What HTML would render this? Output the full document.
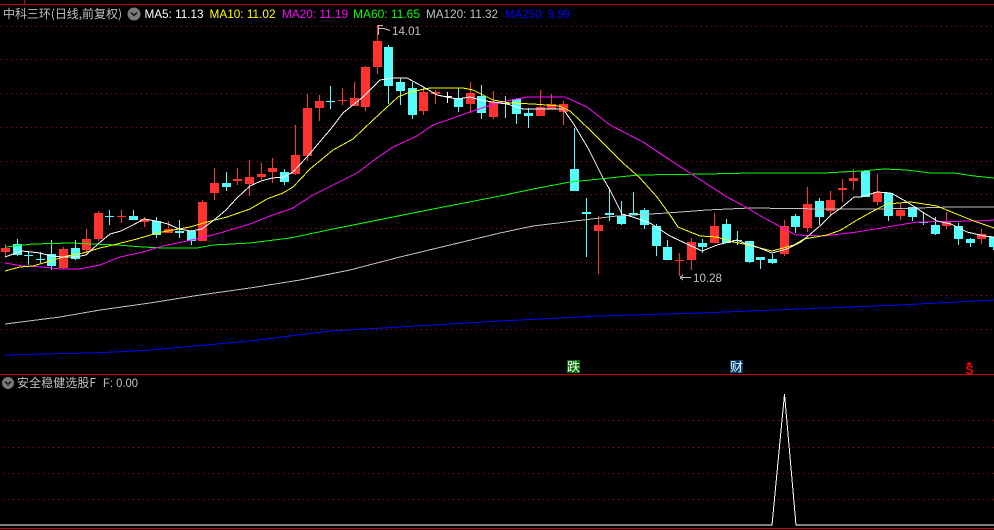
<!DOCTYPE html>
<html lang="zh">
<head>
<meta charset="utf-8">
<title>中科三环</title>
<style>
html,body{margin:0;padding:0;background:#000;width:994px;height:530px;overflow:hidden}
svg{display:block}
text{font-size:12px;font-family:"Liberation Sans","WenQuanYi Zen Hei",sans-serif}
.c{font-family:"WenQuanYi Zen Hei","Noto Sans CJK SC",sans-serif}
.l{fill:none;stroke-width:1;shape-rendering:crispEdges}
.g{fill:none;stroke:#a00000;stroke-width:1;stroke-dasharray:1 4;shape-rendering:crispEdges}
</style>
</head>
<body>
<svg xmlns="http://www.w3.org/2000/svg" width="994" height="530" viewBox="0 0 994 530">
<rect width="994" height="530" fill="#000"/>
<!-- frame -->
<path d="M0 4.5H994M24.5 0V4M0 374.5H994M0 528.5H994" stroke="#c80000" stroke-width="1" fill="none" shape-rendering="crispEdges"/>
<!-- grid -->
<path class="g" d="M1 26.5H994M1 59.5H994M1 93.5H994M1 127.5H994M1 161.5H994M1 194.5H994M1 228.5H994M1 262.5H994M1 295.5H994M1 329.5H994M3 420.5H994M3 447.5H994M3 473.5H994M3 499.5H994"/>
<!-- red wicks -->
<path fill="none" stroke="#ff3232" stroke-width="1" shape-rendering="crispEdges" d="M5.5 244V256M63.5 247V269M86.5 229V253M98.5 211V241M121.5 210V223M144.5 217V227M168.5 221V233M202.5 200V241M214.5 168V200M237.5 168V185M249.5 160V196M261.5 163V180M272.5 158V183M295.5 125V175M307.5 94V161M319.5 95V121M342.5 88V105M354.5 82V106M365.5 66V111M377.5 25V74M423.5 88V115M435.5 90V104M470.5 82V113M493.5 91V119M540.5 90V116M551.5 94V109M563.5 101V125M598.5 216V274M679.5 253V276M691.5 238V270M714.5 213V243M784.5 220V256M807.5 187V232M830.5 191V215M842.5 179V202M853.5 169V190M877.5 174V205M900.5 204V220M946.5 212V229M981.5 229V244"/>
<!-- red bodies -->
<g fill="#ff3232">
<rect x="1" y="248" width="9" height="4"/><rect x="59" y="249" width="9" height="19"/><rect x="82" y="239" width="9" height="11"/><rect x="94" y="213" width="9" height="26"/><rect x="117" y="216" width="9" height="1"/><rect x="140" y="219" width="9" height="3"/><rect x="164" y="229" width="9" height="4"/><rect x="198" y="202" width="9" height="39"/><rect x="210" y="183" width="9" height="10"/><rect x="233" y="179" width="9" height="2"/><rect x="245" y="177" width="9" height="7"/><rect x="257" y="174" width="9" height="3"/><rect x="268" y="168" width="9" height="4"/><rect x="291" y="155" width="9" height="19"/><rect x="303" y="108" width="9" height="48"/><rect x="315" y="101" width="9" height="7"/><rect x="338" y="100" width="9" height="1"/><rect x="350" y="98" width="9" height="8"/><rect x="361" y="67" width="9" height="40"/><rect x="373" y="41" width="9" height="26"/><rect x="419" y="92" width="9" height="19"/><rect x="431" y="92" width="9" height="2"/><rect x="466" y="93" width="9" height="11"/><rect x="489" y="102" width="9" height="15"/><rect x="536" y="107" width="9" height="9"/><rect x="547" y="104" width="9" height="5"/><rect x="559" y="104" width="9" height="8"/><rect x="594" y="225" width="9" height="6"/><rect x="675" y="260" width="9" height="1"/><rect x="687" y="242" width="9" height="18"/><rect x="710" y="226" width="9" height="17"/><rect x="780" y="226" width="9" height="28"/><rect x="803" y="204" width="9" height="24"/><rect x="826" y="200" width="9" height="11"/><rect x="838" y="188" width="9" height="2"/><rect x="849" y="178" width="9" height="3"/><rect x="873" y="192" width="9" height="10"/><rect x="896" y="210" width="9" height="6"/><rect x="942" y="222" width="9" height="4"/><rect x="977" y="234" width="9" height="5"/>
</g>
<!-- cyan wicks -->
<path fill="none" stroke="#54fcfc" stroke-width="1" shape-rendering="crispEdges" d="M17.5 239V256M28.5 251V265M40.5 252V263M51.5 240V270M75.5 240V260M109.5 210V225M133.5 210V220M156.5 217V238M179.5 220V238M191.5 230V245M226.5 172V191M284.5 169V185M330.5 86V109M388.5 45V104M400.5 78V105M412.5 82V119M458.5 88V112M481.5 85V119M505.5 96V118M516.5 98V124M528.5 108V128M574.5 128V191M586.5 198V257M609.5 189V221M621.5 201V225M633.5 192V215M644.5 208V229M656.5 224V256M667.5 240V260M702.5 239V253M726.5 219V243M737.5 231V245M749.5 241V263M760.5 257V269M772.5 254V264M795.5 214V233M819.5 198V225M865.5 170V197M888.5 193V221M912.5 207V221M923.5 213V225M935.5 217V235M958.5 223V245M970.5 238V247M993.5 237V250"/>
<!-- cyan bodies -->
<g fill="#54fcfc">
<rect x="13" y="244" width="9" height="11"/><rect x="24" y="255" width="9" height="1"/><rect x="36" y="259" width="9" height="1"/><rect x="47" y="254" width="9" height="12"/><rect x="71" y="248" width="9" height="11"/><rect x="105" y="216" width="9" height="1"/><rect x="129" y="216" width="9" height="4"/><rect x="152" y="221" width="9" height="14"/><rect x="175" y="231" width="9" height="2"/><rect x="187" y="231" width="9" height="10"/><rect x="222" y="183" width="9" height="4"/><rect x="280" y="172" width="9" height="10"/><rect x="326" y="101" width="9" height="1"/><rect x="384" y="47" width="9" height="39"/><rect x="396" y="82" width="9" height="9"/><rect x="408" y="88" width="9" height="27"/><rect x="454" y="98" width="9" height="9"/><rect x="477" y="96" width="9" height="17"/><rect x="501" y="103" width="9" height="1"/><rect x="512" y="99" width="9" height="15"/><rect x="524" y="113" width="9" height="3"/><rect x="570" y="169" width="9" height="22"/><rect x="582" y="212" width="9" height="2"/><rect x="605" y="213" width="9" height="2"/><rect x="617" y="216" width="9" height="8"/><rect x="629" y="213" width="9" height="2"/><rect x="640" y="210" width="9" height="15"/><rect x="652" y="226" width="9" height="20"/><rect x="663" y="247" width="9" height="13"/><rect x="698" y="243" width="9" height="4"/><rect x="722" y="224" width="9" height="19"/><rect x="733" y="240" width="9" height="1"/><rect x="745" y="241" width="9" height="21"/><rect x="756" y="257" width="9" height="3"/><rect x="768" y="259" width="9" height="4"/><rect x="791" y="216" width="9" height="11"/><rect x="815" y="201" width="9" height="16"/><rect x="861" y="171" width="9" height="26"/><rect x="884" y="193" width="9" height="23"/><rect x="908" y="207" width="9" height="10"/><rect x="919" y="222" width="9" height="1"/><rect x="931" y="225" width="9" height="9"/><rect x="954" y="226" width="9" height="13"/><rect x="966" y="239" width="9" height="4"/><rect x="989" y="237" width="5" height="10"/>
</g>
<!-- white cross -->
<path d="M447.5 92V103M443 96.5H452" stroke="#fff" fill="none" shape-rendering="crispEdges"/>
<!-- MA lines -->
<polyline class="l" stroke="#0000ff" points="5,355 46,354 92,353 115,352 150,350 250,341 330,331 400,327 500,321 600,316 700,313 800,309 900,305 994,300"/>
<polyline class="l" stroke="#c0c0c0" points="5,324 60,317 100,310 150,303 200,295 250,288 300,280 350,270 400,257 450,245 500,233 533,226 583,220 617,216 667,213 707,210 750,208 827,209 884,209 951,207 994,207"/>
<polyline class="l" stroke="#00ff00" points="5,247 33,244 70,243 117,245 143,247 163,248 197,248 213,245 250,243 290,238 333,229 383,219 433,209 500,196 533,189 570,182 600,179 638,175 707,174 750,173 824,173 861,171 884,169 907,170 931,173 954,173 974,176 994,178"/>
<polyline class="l" stroke="#ff00ff" points="5,263 23,266 43,267 60,269 80,269 100,265 120,257 143,252 163,246 187,241 213,235 250,224 270,216 293,208 313,195 357,173 377,158 393,147 417,136 433,125 470,112 497,103 527,97 565,97 587,107 610,125 643,142 667,158 693,175 727,197 744,206 764,218 796,235 824,236 857,232 887,227 917,222 977,221 994,220"/>
<polyline class="l" stroke="#ffff00" points="5,271 20,267 33,266 50,261 67,256 83,253 100,248 117,244 137,239 157,233 173,230 190,227 207,222 227,217 250,209 267,199 283,193 293,187 310,169 333,150 353,139 373,120 398,97 410,92 430,88 463,88 473,90 493,100 510,103 533,104 560,106 570,111 590,130 607,147 623,163 640,178 657,197 670,215 678,227 700,236 717,237 733,242 744,244 772,251 794,245 804,239 827,235 841,230 857,220 877,209 887,204 911,202 937,206 954,213 974,221 994,228"/>
<polyline class="l" stroke="#ffffff" points="5,257 16,253 22,251 40,253 51,256 63,257 75,257 86,255 98,244 110,234 121,231 133,225 144,219 156,221 168,224 179,229 191,231 202,229 214,220 226,210 237,198 250,186 261,181 272,178 284,177 293,172 307,157 323,138 330,130 343,113 363,97 380,80 393,78 407,78 420,85 437,95 447,97 457,99 470,97 480,100 493,102 507,104 523,109 537,109 563,109 573,123 588,148 603,178 610,190 622,214 633,217 650,223 670,236 687,244 702,251 717,245 737,240 744,243 757,247 772,253 787,249 801,242 821,225 831,215 841,208 854,197 861,197 877,192 891,193 907,202 924,213 937,221 951,224 967,232 984,236 994,237"/>
<!-- high / low labels -->
<path d="M378.5 25V35M378.5 25.5H383M378.5 28.5H384M384 28.5L390 30.5" stroke="#c0c0c0" fill="none" shape-rendering="crispEdges"/>
<text x="392" y="35" fill="#c0c0c0" textLength="29" lengthAdjust="spacingAndGlyphs">14.01</text>
<path d="M680 277.5H691M680 277.5L683 275M680 277.5L683 280" stroke="#c0c0c0" fill="none" shape-rendering="crispEdges"/>
<text x="693" y="282" fill="#c0c0c0" textLength="29" lengthAdjust="spacingAndGlyphs">10.28</text>
<!-- header -->
<text class="c" x="3" y="18" fill="#c0c0c0" textLength="119" lengthAdjust="spacing">中科三环(日线,前复权)</text>
<circle cx="134" cy="14" r="6.5" fill="#7a7a7a"/>
<path d="M131 12.5L134 15.5L137 12.5" stroke="#111" stroke-width="1.5" fill="none"/>
<text x="144.500" y="18" fill="#ffffff" textLength="59" lengthAdjust="spacingAndGlyphs">MA5: 11.13</text>
<text x="209.500" y="18" fill="#ffff00" textLength="66" lengthAdjust="spacingAndGlyphs">MA10: 11.02</text>
<text x="282" y="18" fill="#ff00ff" textLength="66" lengthAdjust="spacingAndGlyphs">MA20: 11.19</text>
<text x="353" y="18" fill="#00ff00" textLength="67" lengthAdjust="spacingAndGlyphs">MA60: 11.65</text>
<text x="426" y="18" fill="#c0c0c0" textLength="72" lengthAdjust="spacingAndGlyphs">MA120: 11.32</text>
<text x="505" y="18" fill="#0000ff" textLength="65" lengthAdjust="spacingAndGlyphs">MA250: 9.99</text>
<!-- markers -->
<rect x="567" y="360" width="13" height="13" fill="#006e00"/>
<text class="c" x="567" y="371" fill="#fff" textLength="13" lengthAdjust="spacingAndGlyphs">跌</text>
<rect x="730" y="360" width="13" height="13" fill="#003a6e"/>
<text class="c" x="730" y="371" fill="#fff" textLength="13" lengthAdjust="spacingAndGlyphs">财</text>
<path d="M969 361.500L972 365H966Z" fill="#ff0000"/>
<text x="965.500" y="374" fill="#ff0000" style="font-size:12px;font-weight:bold" textLength="8" lengthAdjust="spacingAndGlyphs">S</text>
<!-- lower pane header -->
<circle cx="8" cy="383" r="6" fill="#7a7a7a"/>
<path d="M5 381.500L8 384.500L11 381.500" stroke="#111" stroke-width="1.5" fill="none"/>
<text class="c" x="17" y="387" fill="#c0c0c0" textLength="79" lengthAdjust="spacing">安全稳健选股F</text>
<text x="103" y="387" fill="#c0c0c0" textLength="35" lengthAdjust="spacingAndGlyphs">F: 0.00</text>
<!-- lower pane line -->
<polyline class="l" stroke="#ffffff" points="0,525 772,525 784.500,394 796,525 994,525"/>
</svg>
</body>
</html>
